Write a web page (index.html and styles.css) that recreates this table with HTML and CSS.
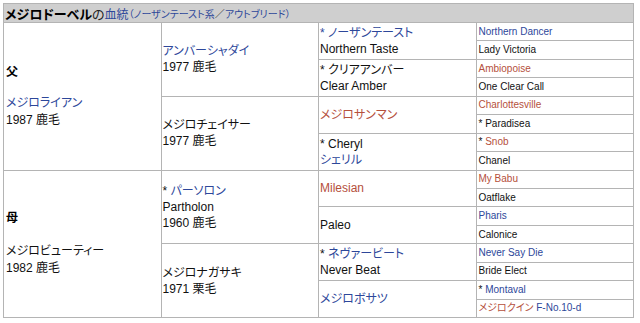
FILE: index.html
```html
<!DOCTYPE html>
<html lang="ja">
<head>
<meta charset="utf-8">
<title>メジロドーベルの血統</title>
<link rel="stylesheet" href="styles.css">
</head>
<body>
<div class="pedigree">
  <div class="title"><b class="horse">メジロドーベル</b><span class="no">の</span> <a class="lnk big">血統</a> <span class="sm"><span class="lnk">（ノーザンテースト系</span>／<span class="lnk">アウトブリード）</span></span></div>

  <div class="c1 s8"><b class="sex">父</b><span class="lnk">メジロライアン</span><span>1987 鹿毛</span></div>
  <div class="c2 s4"><span class="lnk">アンバーシャダイ</span><span>1977 鹿毛</span></div>
  <div class="c3 s2"><span><span class="lnk">* ノーザンテースト</span></span><span>Northern Taste</span></div>
  <div class="c4"><span class="lnk">Northern Dancer</span></div>
  <div class="c4"><span>Lady Victoria</span></div>
  <div class="c3 s2"><span>* クリアアンバー</span><span>Clear Amber</span></div>
  <div class="c4"><span class="red">Ambiopoise</span></div>
  <div class="c4"><span>One Clear Call</span></div>
  <div class="c2 s4"><span>メジロチェイサー</span><span>1977 鹿毛</span></div>
  <div class="c3 s2"><span class="red">メジロサンマン</span></div>
  <div class="c4"><span class="red">Charlottesville</span></div>
  <div class="c4"><span>* Paradisea</span></div>
  <div class="c3 s2"><span>* Cheryl</span><span class="lnk">シェリル</span></div>
  <div class="c4"><span>* <span class="red">Snob</span></span></div>
  <div class="c4"><span>Chanel</span></div>

  <div class="c1 s8"><b class="sex dam">母</b><span>メジロビューティー</span><span>1982 鹿毛</span></div>
  <div class="c2 s4"><span>* <span class="lnk">パーソロン</span></span><span>Partholon</span><span>1960 鹿毛</span></div>
  <div class="c3 s2"><span class="red">Milesian</span></div>
  <div class="c4"><span class="red">My Babu</span></div>
  <div class="c4"><span>Oatflake</span></div>
  <div class="c3 s2"><span>Paleo</span></div>
  <div class="c4"><span class="lnk">Pharis</span></div>
  <div class="c4"><span>Calonice</span></div>
  <div class="c2 s4"><span>メジロナガサキ</span><span>1971 栗毛</span></div>
  <div class="c3 s2"><span>* <span class="lnk">ネヴァービート</span></span><span>Never Beat</span></div>
  <div class="c4"><span class="lnk">Never Say Die</span></div>
  <div class="c4"><span>Bride Elect</span></div>
  <div class="c3 s2"><span class="lnk">メジロボサツ</span></div>
  <div class="c4"><span>* <span class="lnk">Montaval</span></span></div>
  <div class="c4"><span><span class="red">メジロクイン</span> <span class="lnk">F-No.10-d</span></span></div>
</div>
</body>
</html>
```

FILE: styles.css
```css
html, body {
  margin: 0;
  padding: 0;
  background: #ffffff;
}

body {
  font-family: "Liberation Sans", "Noto Sans CJK JP", sans-serif;
  font-feature-settings: "palt";
  color: #111111;
  font-size: 12px;
}

.pedigree {
  margin: 3px 0 0 3px;
  width: 630px;
  height: 314px;
  display: grid;
  grid-template-columns: repeat(4, 1fr);
  grid-template-rows: 19px repeat(16, 1fr);
  border-top: 1px solid #b4b4b4;
  border-left: 1px solid #b4b4b4;
}

.pedigree > div {
  border-right: 1px solid #b4b4b4;
  border-bottom: 1px solid #b4b4b4;
  display: flex;
  flex-direction: column;
  justify-content: center;
  align-items: flex-start;
  min-height: 0;
  overflow: hidden;
  white-space: nowrap;
}

.title {
  grid-column: 1 / 5;
  background: #cfcfcf;
  flex-direction: row !important;
  align-items: center !important;
  justify-content: flex-start !important;
  padding-left: 1px;
  font-size: 13px;
  white-space: pre;
}

.title .horse {
  font-weight: bold;
  color: #000;
}

.title .no {
  color: #222;
}

.title .big {
  font-size: 12px;
}

.title .sm {
  font-size: 10px;
}

.lnk {
  color: #2d479a;
  text-decoration: none;
}

.red {
  color: #b5503c;
}

.c1 { grid-column: 1; padding-left: 2px; line-height: 17px; }
.c2 { grid-column: 2; padding-left: 1px; line-height: 16px; }
.c3 { grid-column: 3; padding-left: 1px; line-height: 16px; }
.c4 { grid-column: 4; padding-left: 2px; font-size: 10px; line-height: 12px; }

.s8 { grid-row: span 8; }
.s4 { grid-row: span 4; }
.s2 { grid-row: span 2; }

.sex {
  font-weight: bold;
  color: #000;
  margin-bottom: 14px;
}

.sex.dam {
  margin-bottom: 16px;
}
```
